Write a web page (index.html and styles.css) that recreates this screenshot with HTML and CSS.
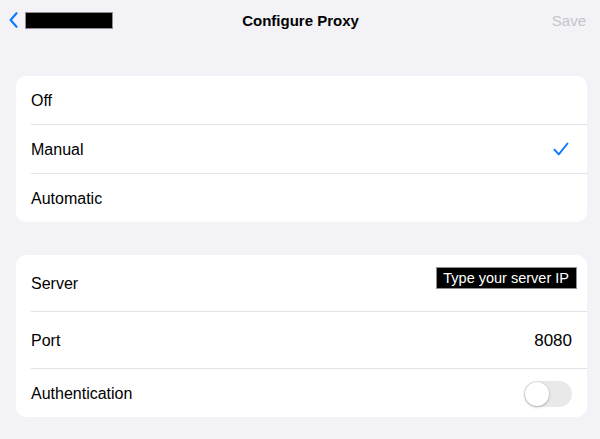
FILE: index.html
```html
<!DOCTYPE html>
<html>
<head>
<meta charset="utf-8">
<link rel="stylesheet" href="styles.css">
</head>
<body>
<div class="page">
  <header class="nav">
    <div class="nav-left">
      <svg class="chev" width="9" height="16" viewBox="0 0 9 16"><path d="M7.5 1.2 L1.6 8 L7.5 14.8" fill="none" stroke="#0a7aff" stroke-width="2.1" stroke-linecap="round" stroke-linejoin="round"/></svg>
      <span class="redact"></span>
    </div>
    <div class="nav-title">Configure Proxy</div>
    <div class="nav-right">Save</div>
  </header>

  <section class="card">
    <div class="row r48"><span class="label">Off</span></div>
    <div class="row r49"><span class="label">Manual</span>
      <svg class="check" width="16" height="14" viewBox="0 0 16 14"><path d="M1.5 7.6 L5.8 12.4 L14.5 1.5" fill="none" stroke="#0a7aff" stroke-width="1.9" stroke-linecap="round" stroke-linejoin="round"/></svg>
    </div>
    <div class="row r49"><span class="label">Automatic</span></div>
  </section>

  <section class="card card2">
    <div class="row r56"><span class="label">Server</span><span class="hint">Type your server IP</span></div>
    <div class="row r57"><span class="label">Port</span><span class="value">8080</span></div>
    <div class="row r49"><span class="label">Authentication</span><span class="toggle"><span class="knob"></span></span></div>
  </section>
</div>
</body>
</html>
```
FILE: styles.css
```css
html, body {
  margin: 0;
  padding: 0;
  background: #f2f2f7;
}
body {
  font-family: "Liberation Sans", Arial, sans-serif;
  font-size: 16px;
  color: #000;
}
.page {
  padding: 0 13px 0 16px;
}
.nav {
  height: 40px;
  display: grid;
  grid-template-columns: 1fr auto 1fr;
  align-items: center;
  margin: 0 -13px 0 -16px;
  padding: 0 14px 0 9px;
}
.nav-left {
  display: flex;
  align-items: center;
  gap: 7px;
}
.chev {
  display: block;
}
.redact {
  display: block;
  width: 86px;
  height: 15px;
  background: #000;
  border: 1px solid #8e8e93;
}
.nav-title {
  font-weight: bold;
  font-size: 15px;
  padding-left: 6px;
}
.nav-right {
  justify-self: end;
  color: #c4c4c9;
  font-size: 15px;
}
.card {
  background: #fff;
  border-radius: 10px;
  margin-top: 36px;
  padding-left: 15px;
  overflow: hidden;
}
.card2 {
  margin-top: 33px;
}
.row {
  display: flex;
  align-items: center;
  justify-content: space-between;
  padding-right: 15px;
  border-top: 1px solid #e1e1e6;
  box-sizing: border-box;
}
.row:first-child {
  border-top: none;
}
.r48 { height: 48px; }
.r49 { height: 49px; }
.r56 { height: 56px; }
.r57 { height: 57px; }
.label {
  line-height: 18px;
  padding-top: 2px;
}
.check {
  display: block;
  margin-right: 3px;
}
.hint {
  background: #000;
  color: #fff;
  font-size: 14.5px;
  line-height: 20px;
  padding: 0 7px 0 6px;
  border: 1px solid #8e8e93;
  margin-right: -5px;
  margin-top: -10px;
}
.value {
  font-size: 17px;
  padding-top: 2px;
}
.toggle {
  position: relative;
  display: block;
  width: 48px;
  height: 26px;
  border-radius: 13px;
  background: #e9e9ea;
  margin-top: 1px;
}
.knob {
  position: absolute;
  left: 1px;
  top: 1px;
  width: 24px;
  height: 24px;
  border-radius: 50%;
  background: #fff;
  box-shadow: 0 1px 3px rgba(0,0,0,0.25), 0 0 0 0.5px rgba(0,0,0,0.06);
}
```
